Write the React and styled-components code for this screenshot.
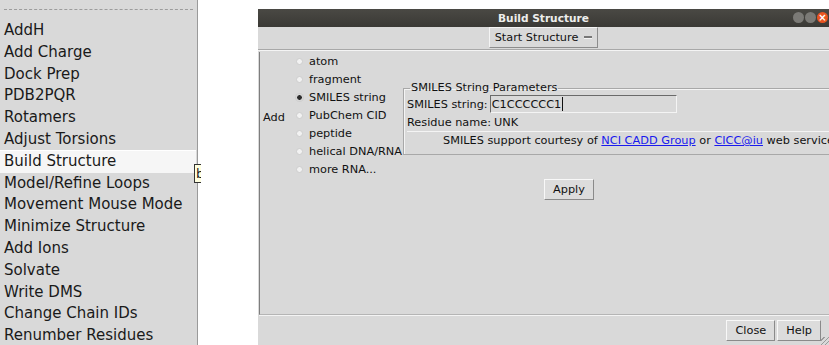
import React from 'react'
import styled, { createGlobalStyle } from 'styled-components'

const GlobalStyle = createGlobalStyle`
  html, body {
    margin: 0;
    padding: 0;
    background: #ffffff;
    overflow: hidden;
  }
  body {
    font-family: 'DejaVu Sans', 'Liberation Sans', sans-serif;
  }
`

const menuItems = [
  'AddH',
  'Add Charge',
  'Dock Prep',
  'PDB2PQR',
  'Rotamers',
  'Adjust Torsions',
  'Build Structure',
  'Model/Refine Loops',
  'Movement Mouse Mode',
  'Minimize Structure',
  'Add Ions',
  'Solvate',
  'Write DMS',
  'Change Chain IDs',
  'Renumber Residues',
]

const radioItems = [
  'atom',
  'fragment',
  'SMILES string',
  'PubChem CID',
  'peptide',
  'helical DNA/RNA',
  'more RNA...',
]

function App() {
  return (
    <>
      <GlobalStyle />
      <Screen>
        <Menu>
          <Tearoff />
          {menuItems.map((item) => (
            <MenuItem key={item} active={item === 'Build Structure'}>
              {item}
              {item === 'Build Structure' && <Tooltip>b</Tooltip>}
            </MenuItem>
          ))}
        </Menu>
        <Window>
          <TitleBar>
            <Title>Build Structure</Title>
            <WinControls>
              <WinDot />
              <WinDot />
              <WinDot close>×</WinDot>
            </WinControls>
          </TitleBar>
          <Toolbar>
            <MenuButton>
              Start Structure <Dash />
            </MenuButton>
          </Toolbar>
          <Main>
            <AddLabel>Add</AddLabel>
            <RadioList>
              {radioItems.map((r) => (
                <RadioRow key={r}>
                  <Radio checked={r === 'SMILES string'} />
                  {r}
                </RadioRow>
              ))}
            </RadioList>
            <RightColumn>
              <Group>
                <Legend>SMILES String Parameters</Legend>
                <FieldRow>
                  <FieldLabel>SMILES string:</FieldLabel>
                  <Entry wide>
                    C1CCCCCC1<Caret />
                  </Entry>
                </FieldRow>
                <FieldRow>
                  <FieldLabel>Residue name:</FieldLabel>
                  <Entry>UNK</Entry>
                </FieldRow>
                <Credit>
                  SMILES support courtesy of <Link>NCI CADD Group</Link> or{' '}
                  <Link>CICC@iu</Link> web service
                </Credit>
              </Group>
              <ApplyRow>
                <Button>Apply</Button>
              </ApplyRow>
            </RightColumn>
          </Main>
          <BottomBar>
            <Button>Close</Button>
            <Button>Help</Button>
            <Grip />
          </BottomBar>
        </Window>
      </Screen>
    </>
  )
}

export default App

const Screen = styled.div`
  display: flex;
  width: 829px;
  height: 345px;
  background: #ffffff;
`

const Menu = styled.div`
  width: 198px;
  flex-shrink: 0;
  height: 345px;
  background: #d9d9d9;
  border-right: 1px solid #9a9a9a;
  padding-top: 9px;
  box-sizing: border-box;
`

const Tearoff = styled.div`
  margin: 0 4px 10px 4px;
  border-top: 1px dashed #9c9c9c;
  height: 0;
`

const MenuItem = styled.div`
  position: relative;
  height: 21.8px;
  line-height: 21.8px;
  padding-left: 4px;
  font-size: 15px;
  color: #1a1a1a;
  white-space: nowrap;
  background: ${(p) => (p.active ? '#f6f6f6' : 'transparent')};
  border-top: ${(p) => (p.active ? '1px solid #ffffff' : 'none')};
  margin-top: ${(p) => (p.active ? '-1px' : '0')};
  margin-right: 1px;
`

const Tooltip = styled.div`
  position: absolute;
  left: 194px;
  top: 13px;
  width: 7px;
  height: 19px;
  background: #ffffe0;
  border: 1px solid #333;
  border-right: none;
  font-size: 13px;
  line-height: 18px;
  padding-left: 1px;
  box-sizing: border-box;
  overflow: hidden;
  z-index: 2;
`

const Window = styled.div`
  margin-left: 60px;
  margin-top: 9px;
  flex: 1;
  display: flex;
  flex-direction: column;
  background: #d9d9d9;
  font-size: 11.3px;
  color: #111;
  overflow: hidden;
`

const TitleBar = styled.div`
  position: relative;
  height: 18px;
  background: linear-gradient(#4a4944, #3a3935);
  display: flex;
  align-items: center;
  justify-content: center;
`

const Title = styled.div`
  color: #eeeeec;
  font-weight: bold;
  font-size: 10.6px;
`

const WinControls = styled.div`
  position: absolute;
  right: 1px;
  top: 3px;
  display: flex;
  gap: 1px;
`

const WinDot = styled.div`
  width: 11px;
  height: 11px;
  border-radius: 50%;
  background: ${(p) => (p.close ? '#e95420' : '#7b7a76')};
  color: #fff;
  font-size: 10px;
  line-height: 11px;
  text-align: center;
  font-weight: bold;
`

const Toolbar = styled.div`
  height: 22px;
  display: flex;
  justify-content: center;
  border-bottom: 1px solid #a8a8a8;
  box-shadow: 0 1px 0 #f4f4f4;
`

const MenuButton = styled.div`
  display: flex;
  align-items: center;
  gap: 6px;
  padding: 0 5px;
  height: 21px;
  box-sizing: border-box;
  border: 1px solid;
  border-color: #f4f4f4 #8c8c8c #8c8c8c #f4f4f4;
`

const Dash = styled.span`
  display: inline-block;
  width: 8px;
  height: 2px;
  background: #777;
  border-bottom: 1px solid #f4f4f4;
`

const Main = styled.div`
  flex: 1;
  display: flex;
  align-items: flex-start;
  margin-top: 2px;
  margin-left: 1px;
  border-left: 1px solid #7e7e7e;
  border-bottom: 1px solid #b5b5b5;
  box-shadow: 0 1px 0 #f4f4f4;
  padding-top: 1px;
  overflow: hidden;
`

const AddLabel = styled.div`
  flex-shrink: 0;
  margin-top: 58px;
  padding-left: 3px;
  width: 32px;
`

const RadioList = styled.div`
  flex-shrink: 0;
  display: flex;
  flex-direction: column;
  width: 108px;
`

const RadioRow = styled.div`
  display: flex;
  align-items: center;
  height: 17.9px;
  gap: 6px;
  white-space: nowrap;
`

const Radio = styled.span`
  flex-shrink: 0;
  width: 5px;
  height: 5px;
  border-radius: 50%;
  background: ${(p) => (p.checked ? '#2b2b2b' : '#f2f2f2')};
  border: 1px solid ${(p) => (p.checked ? '#f4f4f4' : '#cdcdcd')};
  box-shadow: ${(p) => (p.checked ? '0 0 0 1px #cfcfcf' : 'none')};
  margin-left: 1px;
`

const RightColumn = styled.div`
  display: flex;
  flex-direction: column;
  margin-top: 28px;
  flex-shrink: 0;
`

const Group = styled.fieldset`
  margin: 0;
  width: 440px;
  padding: 0 2px 5px 3px;
  border: 1px solid #a8a8a8;
  box-shadow: inset 1px 1px 0 #f4f4f4;
`

const Legend = styled.legend`
  padding: 0 1px;
  margin-left: 3px;
  line-height: 14px;
`

const FieldRow = styled.div`
  display: flex;
  align-items: center;
  height: 18px;
`

const FieldLabel = styled.div`
  white-space: nowrap;
  padding-right: 2px;
`

const Entry = styled.div`
  display: flex;
  align-items: center;
  width: ${(p) => (p.wide ? '187px' : 'auto')};
  height: 18px;
  box-sizing: border-box;
  padding-left: 1px;
  border: ${(p) => (p.wide ? '1px solid' : 'none')};
  border-color: #6a6a6a #f4f4f4 #f4f4f4 #6a6a6a;
`

const Caret = styled.span`
  display: inline-block;
  width: 1px;
  height: 14px;
  background: #111;
  margin-left: 1px;
`

const Credit = styled.div`
  padding-left: 36px;
  white-space: nowrap;
  height: 17px;
  line-height: 17px;
  border-top: 1px solid #f4f4f4;
`

const Link = styled.span`
  color: #1a1aee;
  text-decoration: underline;
`

const ApplyRow = styled.div`
  display: flex;
  padding-left: 141px;
  margin-top: 24px;
`

const Button = styled.div`
  height: 21px;
  box-sizing: border-box;
  padding: 0 8px;
  display: flex;
  align-items: center;
  border: 1px solid;
  border-color: #f8f8f8 #8a8a8a #8a8a8a #f8f8f8;
  background: #dcdcdc;
`

const BottomBar = styled.div`
  position: relative;
  height: 29px;
  display: flex;
  align-items: center;
  justify-content: flex-end;
  gap: 2px;
  padding-right: 8px;
  margin-top: 1px;
`

const Grip = styled.div`
  position: absolute;
  right: 0;
  bottom: 0;
  width: 8px;
  height: 8px;
  background: repeating-linear-gradient(
    135deg,
    transparent 0 2px,
    #9a9a9a 2px 3px
  );
`
